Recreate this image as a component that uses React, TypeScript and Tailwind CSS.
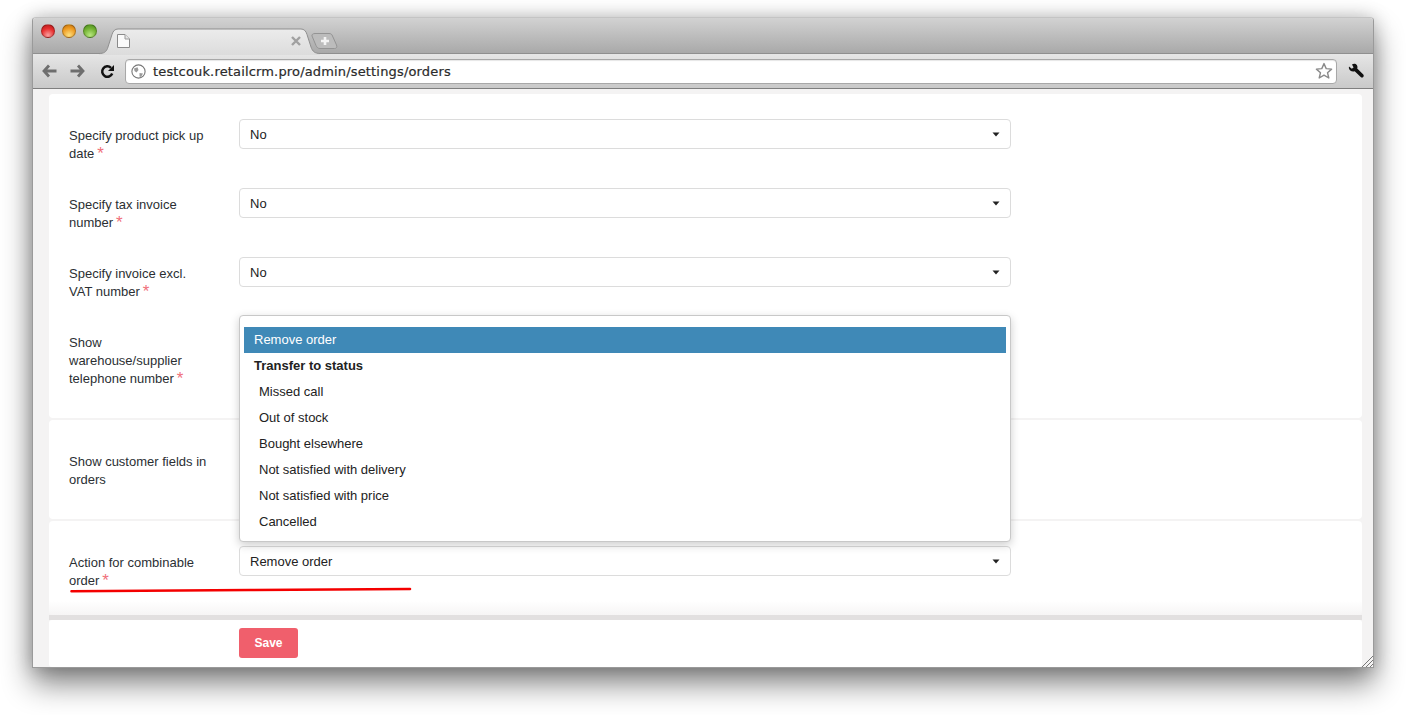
import React from "react";

const Caret = () => (
  <svg width="8" height="5" viewBox="0 0 8 5" className="shrink-0">
    <path d="M0.5 0.5H7.5L4 4.5Z" fill="#222" />
  </svg>
);

const Select = ({ value }: { value: string }) => (
  <div className="flex h-[30px] w-[772px] shrink-0 items-center justify-between rounded-[4px] border border-[#dcdcdc] bg-white px-[10px] pt-[1px] text-[13px] text-[#222]">
    <span>{value}</span>
    <Caret />
  </div>
);

const Label = ({ lines, star = true }: { lines: string[]; star?: boolean }) => (
  <div className="w-[170px] shrink-0 pt-[8px] text-[13px] leading-[18px] text-[#2b2f33]">
    {lines.map((l, i) => (
      <div key={l} className="whitespace-nowrap">
        {l}
        {star && i === lines.length - 1 && (
          <span className="relative top-[1px] ml-[3px] text-[17px] leading-[10px] text-[#f0707a]">*</span>
        )}
      </div>
    ))}
  </div>
);

const Row = ({ lines, value, star, cls = "" }: { lines: string[]; value: string; star?: boolean; cls?: string }) => (
  <div className={"flex " + cls}>
    <Label lines={lines} star={star} />
    <Select value={value} />
  </div>
);

const Light = ({ cls }: { cls: string }) => (
  <div className={"h-[14px] w-[14px] rounded-full border border-[#00000040] " + cls} />
);

const options = [
  "Missed call",
  "Out of stock",
  "Bought elsewhere",
  "Not satisfied with delivery",
  "Not satisfied with price",
  "Cancelled",
];

export default function App() {
  return (
    <div className="h-[715px] w-[1406px] overflow-hidden bg-white pl-[32px] pt-[17px] font-['Liberation_Sans',Arial,sans-serif]">
      <div className="relative flex h-[651px] w-[1342px] flex-col overflow-visible rounded-t-[4px] border border-[#9a9a9a] border-t-[#c4c4c4] bg-[#f4f3f3] shadow-[0_16px_30px_rgba(0,0,0,0.48),0_0_18px_rgba(0,0,0,0.22)]">
        {/* title bar */}
        <div className="relative z-10 flex h-[35px] shrink-0 items-start gap-[7px] rounded-t-[3px] bg-gradient-to-b from-[#d2d2d2] to-[#a9a9a9] pl-[8px] pt-[6px]">
          <Light cls="bg-[radial-gradient(circle_at_50%_85%,#f8a0a0,#e83030_55%,#b01818)]" />
          <Light cls="bg-[radial-gradient(circle_at_50%_85%,#fde080,#ee9a20_60%,#c07010)]" />
          <Light cls="bg-[radial-gradient(circle_at_50%_85%,#b8e880,#70b030_60%,#4a8a20)]" />
          <svg width="245" height="27" viewBox="0 0 245 27" className="absolute left-[65px] top-[10px]">
            <defs>
              <linearGradient id="tabfill" x1="0" y1="0" x2="0" y2="1">
                <stop offset="0" stopColor="#ececec" />
                <stop offset="1" stopColor="#dcdcdc" />
              </linearGradient>
            </defs>
            <path
              d="M217 5.5H231C233 5.5 234 6.5 234.5 8L238.5 17C239.3 19 238.5 20.5 236.5 20.5H222C220 20.5 219 19.5 218 17.5L214 8C213.5 6.5 215 5.5 217 5.5Z"
              fill="#bcbcbc"
              stroke="#949494"
            />
            <path d="M227 9V17M223 13H231" stroke="#f4f4f4" strokeWidth="2.6" />
            <path
              d="M1 25.5C6 25.5 8 24 9.5 20.5L14 6.5C15 3 17 1 20 1H203C206 1 208 3 209 6.5L213 19C214.5 23.5 217 25.5 222 25.5V27H1Z"
              fill="url(#tabfill)"
            />
            <path
              d="M1 25.5C6 25.5 8 24 9.5 20.5L14 6.5C15 3 17 1 20 1H203C206 1 208 3 209 6.5L213 19C214.5 23.5 217 25.5 222 25.5"
              fill="none"
              stroke="#8f8f8f"
            />
          </svg>
          <svg width="14" height="14" viewBox="0 0 14 14" className="absolute left-[84px] top-[16px]">
            <path d="M0.5 0.5H8L12.5 5V13.5H0.5Z" fill="#fafafa" stroke="#8a8a8a" />
            <path d="M8 0.5V5H12.5" fill="#e5e5e5" stroke="#9a9a9a" />
          </svg>
          <svg width="10" height="10" viewBox="0 0 10 10" className="absolute left-[258px] top-[18px]">
            <path d="M1 1L9 9M9 1L1 9" stroke="#a0a0a0" strokeWidth="2.4" />
          </svg>
        </div>
        {/* toolbar */}
        <div className="flex h-[36px] shrink-0 items-center border-b border-t border-b-[#7f7f7f] border-t-[#8f8f8f] bg-gradient-to-b from-[#e6e6e6] to-[#c9c9c9]">
          <svg width="15" height="14" viewBox="0 0 15 14" className="ml-[9px]">
            <path d="M7 1.5L2 7L7 12.5M2.5 7H14.5" fill="none" stroke="#6e6e6e" strokeWidth="2.8" />
          </svg>
          <svg width="15" height="14" viewBox="0 0 15 14" className="ml-[13px]">
            <path d="M8 1.5L13 7L8 12.5M12.5 7H0.5" fill="none" stroke="#6e6e6e" strokeWidth="2.8" />
          </svg>
          <svg width="15" height="15" viewBox="0 0 15 15" className="ml-[15px]">
            <path d="M12.2 9.5A5.2 5.2 0 1 1 11 3.8" fill="none" stroke="#111" strokeWidth="2.5" />
            <path d="M14 1V7H8Z" fill="#111" />
          </svg>
          <div className="ml-[10px] flex h-[25px] w-[1212px] items-center rounded-[4px] border border-[#a8a8a8] bg-white pl-[5px] pr-[3px] shadow-[inset_0_1px_1px_rgba(0,0,0,0.1)]">
            <svg width="15" height="15" viewBox="0 0 15 15" className="shrink-0">
              <circle cx="7.5" cy="7.5" r="6.6" fill="#fff" stroke="#777" strokeWidth="1.1" />
              <path d="M3 4.5L6.5 3.2L7.5 6L5.5 8.5L3.5 7ZM8.5 9L12 9.5L10 13L8.5 12.5Z" fill="#999" />
            </svg>
            <span className="ml-[7px] pt-[1px] font-['DejaVu_Sans',sans-serif] text-[13px] tracking-[0.16px] text-[#2b2b2b] [-webkit-text-stroke:0.2px_#2b2b2b]">
              testcouk.retailcrm.pro/admin/settings/orders
            </span>
            <svg width="18" height="18" viewBox="0 0 18 18" className="ml-auto shrink-0">
              <path d="M9 1.6L11.2 6.6L16.6 7.1L12.5 10.7L13.8 16L9 13.2L4.2 16L5.5 10.7L1.4 7.1L6.8 6.6Z" fill="#fff" stroke="#8a8a8a" strokeWidth="1.4" strokeLinejoin="round" />
            </svg>
          </div>
          <svg width="16" height="16" viewBox="0 0 16 16" className="ml-[11px]">
            <path d="M1 3.5L3.8 5.8L5.6 4.5L4 1.5C5.5.4 7.8.6 8.8 2C9.6 3.2 9.6 4.6 9.2 5.6L15.3 11.6C16 12.5 15.8 13.4 15.2 14S13.6 14.8 12.7 14L6.7 8.2C5.2 8.7 3.4 8.4 2.2 7.4C1 6.4.6 4.8 1 3.5Z" fill="#111" />
          </svg>
        </div>
        {/* content */}
        <div className="relative min-h-0 flex-1 overflow-hidden bg-[#f4f3f3] pl-[16px] pr-[11px] pt-[5px]">
          <div className="h-[324px] rounded-[4px] bg-white pl-[20px] pt-[25px]">
            <Row lines={["Specify product pick up", "date"]} value="No" cls="mb-[25px]" />
            <Row lines={["Specify tax invoice", "number"]} value="No" cls="mb-[25px]" />
            <Row lines={["Specify invoice excl.", "VAT number"]} value="No" cls="mb-[25px]" />
            <Row lines={["Show", "warehouse/supplier", "telephone number"]} value="" />
          </div>
          <div className="mt-[2px] h-[99px] rounded-[4px] bg-white pl-[20px] pt-[25px]">
            <Row lines={["Show customer fields in", "orders"]} value="" star={false} />
          </div>
          <div className="mt-[2px] h-[94px] rounded-[4px] bg-gradient-to-b from-white from-[85%] to-[#f6f5f5] pl-[20px] pt-[25px]">
            <Row lines={["Action for combinable", "order"]} value="Remove order" />
          </div>
          <div className="h-[5px] bg-[#e2e0e0]" />
          <div className="h-[47px] rounded-[3px] bg-white pl-[190px] pt-[8px]">
            <div className="flex h-[30px] w-[59px] items-center justify-center rounded-[3px] bg-[#f05f6c] text-[12px] font-bold text-white">
              Save
            </div>
          </div>

          {/* dropdown overlay */}
          <div className="absolute left-[206px] top-[226px] h-[227px] w-[772px] rounded-[4px] border border-[#c8c8c8] bg-white p-[4px] pt-[11px] text-[13px] text-[#222] shadow-[0_3px_10px_rgba(0,0,0,0.2)]">
            <div className="flex h-[26px] items-center bg-[#3f89b7] pl-[10px] text-white">Remove order</div>
            <div className="flex h-[26px] items-center pl-[10px] font-bold">Transfer to status</div>
            {options.map((o) => (
              <div key={o} className="flex h-[26px] items-center pl-[15px]">
                {o}
              </div>
            ))}
          </div>

          {/* red hand-drawn underline */}
          <svg width="342" height="6" viewBox="0 0 342 6" className="absolute left-[37px] top-[498px]">
            <path d="M1.5 4.2C60 3.8 120 3.6 180 3C240 2.6 300 2.2 340 2" fill="none" stroke="#f40000" strokeWidth="2.6" strokeLinecap="round" />
          </svg>

          {/* resize grip */}
          <svg width="12" height="12" viewBox="0 0 12 12" className="absolute bottom-0 right-0">
            <path d="M1 12L12 1M5 12L12 5M9 12L12 9" stroke="#777" strokeWidth="1" />
          </svg>
        </div>
      </div>
    </div>
  );
}
